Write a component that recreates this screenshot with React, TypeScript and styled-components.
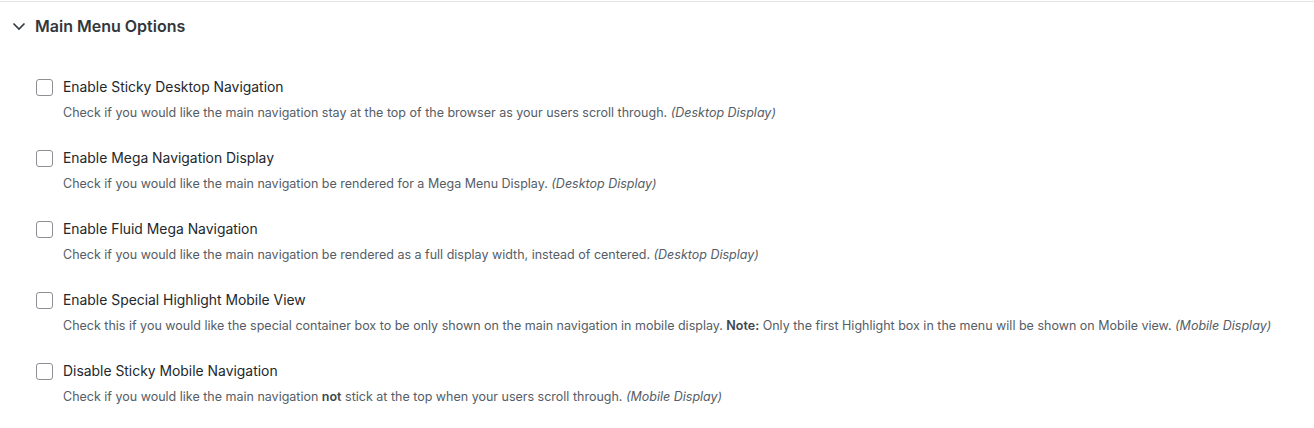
import React from "react";
import styled, { createGlobalStyle } from "styled-components";

const Global = createGlobalStyle`
  html, body { margin: 0; padding: 0; background: #fff; }
  body { font-family: Inter, "Noto Sans", sans-serif; -webkit-font-smoothing: antialiased; }
`;

const Panel = styled.section`
  margin-top: 1px;
  border-top: 1px solid #e2e4e7;
`;

const Header = styled.button`
  display: flex;
  align-items: center;
  gap: 8px;
  width: 100%;
  height: 48px;
  padding: 0 0 0 11px;
  border: 0;
  background: transparent;
  font-family: inherit;
  font-size: 16px;
  font-weight: 600;
  color: #32373c;
  text-align: left;
  cursor: pointer;
`;

const Body = styled.div`
  display: flex;
  flex-direction: column;
  gap: 26px;
  padding: 27px 0 0 36px;
`;

const Option = styled.div`
  display: flex;
  flex-direction: column;
`;

const Row = styled.label`
  display: flex;
  align-items: center;
  gap: 10px;
  height: 20px;
  font-size: 13.9px;
  color: #23282d;
`;

const Box = styled.input.attrs({ type: "checkbox" })`
  appearance: none;
  margin: 0;
  width: 17px;
  height: 17px;
  border: 1px solid #8c8f94;
  border-radius: 3px;
  background: #fff;
`;

const Help = styled.p`
  margin: 7px 0 0 27px;
  font-size: 12.5px;
  line-height: 18px;
  color: #555d66;
  b { font-weight: 600; color: #40464d; }
  i { font-style: italic; }
`;

const Chevron = () => (
  <svg width="16" height="16" viewBox="0 0 16 16" fill="none" stroke="#32373c" strokeWidth="1.6">
    <path d="M2.5 5.5l5.5 5.5 5.5-5.5" />
  </svg>
);

const options: { label: string; help: React.ReactNode }[] = [
  {
    label: "Enable Sticky Desktop Navigation",
    help: <>Check if you would like the main navigation stay at the top of the browser as your users scroll through. <i>(Desktop Display)</i></>,
  },
  {
    label: "Enable Mega Navigation Display",
    help: <>Check if you would like the main navigation be rendered for a Mega Menu Display. <i>(Desktop Display)</i></>,
  },
  {
    label: "Enable Fluid Mega Navigation",
    help: <>Check if you would like the main navigation be rendered as a full display width, instead of centered. <i>(Desktop Display)</i></>,
  },
  {
    label: "Enable Special Highlight Mobile View",
    help: <>Check this if you would like the special container box to be only shown on the main navigation in mobile display. <b>Note:</b> Only the first Highlight box in the menu will be shown on Mobile view. <i>(Mobile Display)</i></>,
  },
  {
    label: "Disable Sticky Mobile Navigation",
    help: <>Check if you would like the main navigation <b>not</b> stick at the top when your users scroll through. <i>(Mobile Display)</i></>,
  },
];

export default function App() {
  return (
    <>
      <Global />
      <Panel>
        <Header>
          <Chevron />
          Main Menu Options
        </Header>
        <Body>
          {options.map((o) => (
            <Option key={o.label}>
              <Row>
                <Box />
                {o.label}
              </Row>
              <Help>{o.help}</Help>
            </Option>
          ))}
        </Body>
      </Panel>
    </>
  );
}
